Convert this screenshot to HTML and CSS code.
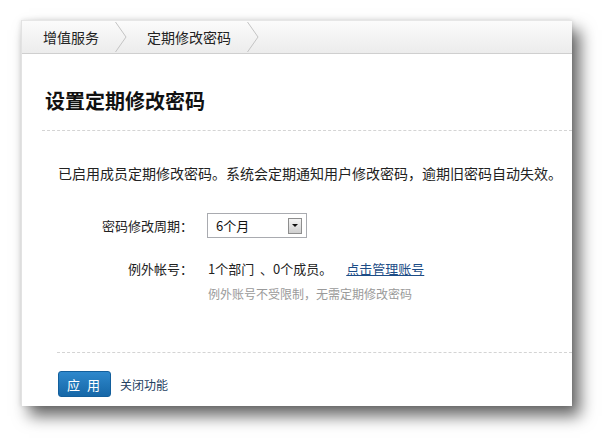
FILE: index.html
```html
<!DOCTYPE html>
<html lang="zh-CN">
<head>
    <meta charset="UTF-8">
    <title>设置定期修改密码</title>
    <link rel="stylesheet" href="styles.css">
</head>
<body>
    <div class="page">
        <div class="panel">
            <div class="crumbs">
                <span class="crumb">增值服务</span>
                <svg class="sep" width="12" height="32" viewBox="0 0 12 32"><polyline points="0.5,1 11,16 0.5,31" fill="none" stroke="#c4c4c4" stroke-width="1"/></svg>
                <span class="crumb">定期修改密码</span>
                <svg class="sep" width="12" height="32" viewBox="0 0 12 32"><polyline points="0.5,1 11,16 0.5,31" fill="none" stroke="#c4c4c4" stroke-width="1"/></svg>
            </div>

            <h2 class="title">设置定期修改密码</h2>
            <div class="divider"></div>

            <p class="intro">已启用成员定期修改密码。系统会定期通知用户修改密码，逾期旧密码自动失效。</p>

            <div class="row row-period">
                <span class="label">密码修改周期：</span>
                <div class="select">
                    <span class="select-text">6个月</span>
                    <span class="select-btn"><i class="arrow"></i></span>
                </div>
            </div>

            <div class="row row-except">
                <span class="label">例外帐号：</span>
                <span class="value">1个部门&nbsp;&nbsp;、0个成员。<a class="link" href="#">点击管理账号</a></span>
            </div>
            <div class="hint">例外账号不受限制，无需定期修改密码</div>

            <div class="divider divider-foot"></div>

            <div class="actions">
                <button class="btn">应 用</button>
                <a class="close" href="#">关闭功能</a>
            </div>
        </div>
    </div>
</body>
</html>
```

FILE: styles.css
```css
body {
    margin: 0;
    background: #ffffff;
    font-family: "Noto Sans CJK SC", "Noto Sans", sans-serif;
    color: #222;
}

.page {
    padding: 20px 0 42px 21px;
}

.panel {
    width: 551px;
    height: 386px;
    background: #ffffff;
    box-sizing: border-box;
    border-left: 1px solid #e2e2e2;
    box-shadow: 8px 10px 15px rgba(0,0,0,0.6), 0 0 5px rgba(0,0,0,0.12);
    overflow: hidden;
}

.crumbs {
    height: 32px;
    display: flex;
    align-items: center;
    padding-left: 21px;
    background: linear-gradient(#fbfbfb, #ececec);
    border-top: 1px solid #e6e6e6;
    border-bottom: 1px solid #cfcfcf;
}

.crumb {
    font-size: 14px;
    line-height: 32px;
    color: #222;
}

.sep {
    display: block;
    margin: 0 20px 0 16px;
}

.title {
    margin: 33px 0 0 23px;
    font-size: 20px;
    line-height: 28px;
    font-weight: 600;
    color: #111;
}

.divider {
    margin: 15px 0 0 20px;
    border-top: 1px dashed #d4d4d4;
}

.intro {
    margin: 32px 0 0 36px;
    font-size: 14px;
    line-height: 20px;
    color: #222;
}

.row {
    display: flex;
    align-items: center;
}

.row-period {
    margin-top: 30px;
}

.row-except {
    margin-top: 21px;
    line-height: 20px;
}

.label {
    width: 171px;
    text-align: right;
    font-size: 13px;
    color: #222;
    margin-right: 14px;
}

.select {
    width: 100px;
    height: 25px;
    box-sizing: border-box;
    border: 1px solid #a9abb0;
    display: flex;
    align-items: center;
    justify-content: space-between;
    padding: 0 4px 0 8px;
    background: #fff;
}

.select-text {
    font-size: 13px;
    color: #111;
}

.select-btn {
    width: 14px;
    height: 16px;
    box-sizing: border-box;
    border: 1px solid #8e8e8e;
    background: linear-gradient(#f4f4f4, #cfcfcf);
    display: flex;
    align-items: center;
    justify-content: center;
}

.arrow {
    width: 0;
    height: 0;
    border-left: 3px solid transparent;
    border-right: 3px solid transparent;
    border-top: 3px solid #111;
}

.value {
    font-size: 13px;
    color: #222;
    margin-left: 1px;
}

.link {
    color: #1c4c86;
    text-decoration: underline;
    margin-left: 14px;
}

.hint {
    margin: 6px 0 0 186px;
    font-size: 12px;
    line-height: 18px;
    color: #9a9a9a;
}

.divider-foot {
    margin: 49px 0 0 35px;
}

.actions {
    margin: 18px 0 0 36px;
    display: flex;
    align-items: center;
}

.btn {
    width: 53px;
    height: 26px;
    border: 1px solid #135f9c;
    border-radius: 3px;
    background: linear-gradient(#2e88cc, #1667a7);
    color: #fff;
    font-family: "Noto Sans CJK SC", sans-serif;
    font-size: 13px;
    letter-spacing: 2px;
    padding: 0;
}

.close {
    margin-left: 9px;
    font-size: 12px;
    color: #24405f;
    text-decoration: none;
}
```
